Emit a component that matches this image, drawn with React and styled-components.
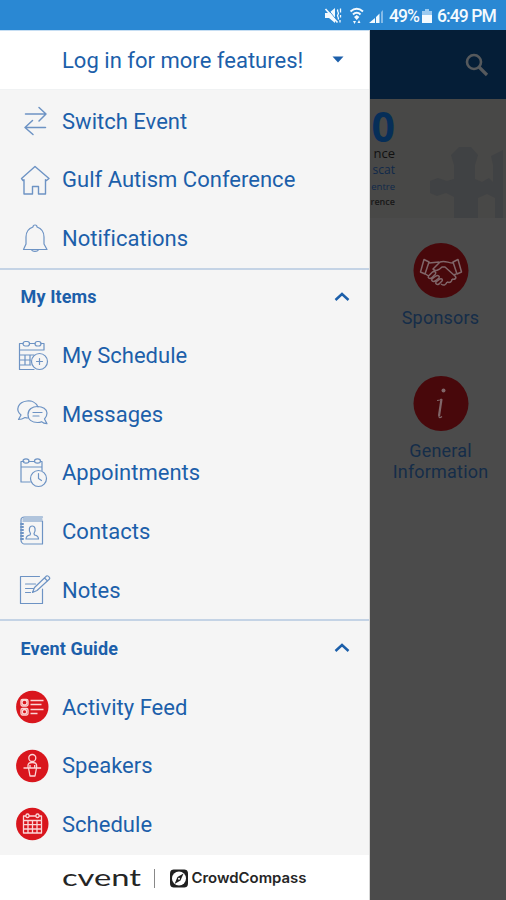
import React from "react";
import styled, { createGlobalStyle } from "styled-components";

const Global = createGlobalStyle`
  * { box-sizing: border-box; }
  html, body, #root { margin: 0; height: 100%; }
  body { font-family: Roboto, "Liberation Sans", sans-serif; overflow: hidden; background: #4b4b4b; }
`;
const Screen = styled.div`
  width: 506px; height: 900px; display: flex; flex-direction: column; overflow: hidden; background: #4b4b4b;
`;
const StatusBar = styled.header`
  height: 30px; flex: none; display: flex; align-items: center; justify-content: flex-end;
  padding: 1px 9px 0 0; background: #2a88d3; color: #f4fafe;
  svg { display: block; flex: none; }
`;
const StatusText = styled.span`
  font-size: 17.5px; font-weight: 500; line-height: 30px; white-space: nowrap; width: ${p => p.$w}px;
  letter-spacing: ${p => p.$ls || 0}px;
`;
const Gap = styled.i`width: ${p => p.$w}px; flex: none;`;
const Body = styled.div`flex: 1; min-height: 0; display: flex;`;
const Drawer = styled.nav`
  width: 370px; flex: none; display: flex; flex-direction: column; background: #f5f5f5; color: #1c5faa;
  border-right: 1px solid #d5d5d5;
`;
const Login = styled.button`
  height: 59px; flex: none; border: 0; margin: 0; padding: 0 25px 0 62px; background: #fff; color: inherit;
  font: 400 22px/59px Roboto, sans-serif; letter-spacing: 0.02px; white-space: nowrap;
  display: flex; justify-content: space-between; align-items: center; border-top: 1px solid #c6def3;
  svg { margin-bottom: 2px; }
`;
const Menu = styled.div`flex: 1; min-height: 0; padding-top: 2px; border-top: 1px solid #f0f2f3; overflow: hidden;`;
const Row = styled.a`
  height: 58.6px; display: flex; align-items: center; font-size: 22px; white-space: nowrap; letter-spacing: 0.02px;
`;
const IconBox = styled.span`
  width: 62px; height: 100%; flex: none; display: flex; align-items: center; padding-left: 15px;
  svg { display: block; }
`;
const Section = styled.h2`
  height: 58.6px; margin: 0; padding: 0 19px 3px 20.5px; border-top: 2px solid #c4d3e5; display: flex;
  align-items: center; justify-content: space-between; font-size: 18px; font-weight: 700; letter-spacing: 0.12px;
`;
const Footer = styled.footer`
  height: 45px; flex: none; background: #fff; display: flex; align-items: center; padding: 2px 0 0 61px; color: #252525;
  svg { display: block; }
`;
const Rule = styled.i`width: 1px; height: 19px; background: #888; margin: 0 14px 0 11px;`;

const Page = styled.main`flex: 1; min-width: 0; display: flex; flex-direction: column;`;
const AppBar = styled.div`
  height: 69px; flex: none; background: #051e37; display: flex; align-items: center; justify-content: flex-end; padding-right: 17px;
`;
const Banner = styled.div`
  height: 119px; flex: none; overflow: hidden; display: flex; justify-content: space-between; background: #484847;
`;
const BannerText = styled.div`width: 25px; display: flex; flex-direction: column; align-items: flex-end; padding-top: 8px;`;
const BannerLine = styled.span`
  font: ${p => p.$b || 400} ${p => p.$s}px/${p => p.$h}px "Open Sans", sans-serif; color: ${p => p.$c}; white-space: nowrap;
`;
const Tile = styled.a`
  display: flex; flex-direction: column; align-items: center; margin: ${p => p.$top}px 0 0 5px;
  color: #152d49; font-size: 18px; line-height: 21.5px; letter-spacing: 0.2px; text-align: center;
  svg { display: block; margin-bottom: 8px; }
`;

const Icon = ({ children, w = 36, h = 36, sw = 1.2 }) => (
  <svg width={w} height={h} viewBox={`0 0 ${w} ${h}`} fill="none" stroke="#6d93c4" strokeWidth={sw} strokeLinecap="round" strokeLinejoin="round">{children}</svg>
);
const Chevron = () => (
  <svg width="16" height="10" viewBox="0 0 16 10" fill="none" stroke="#1c5faa" strokeWidth="2.4"><path d="M1.500 8 8 2l6.500 6" /></svg>
);
const icons = {
  swap: <Icon sw={1.5}><path d="M10.500 11h20M24 4.500l7 6.500-7 7M30.500 24.500h-20M17.500 17.500l-7.500 7 8 7" /></Icon>,
  home: <Icon sw={1.4}><path d="M6.500 16.500 20 4.500 34 16.500l-2.500 2-1-.8V32h-7v-7.500h-6V32H9V17.700l-1 .8z" /></Icon>,
  bell: <Icon><path d="M20 5c-1.500 0-2 1-2 2-4.500 1.500-7 4.500-7 10v7l-2.500 5.500h23.500L29 24v-7c0-5.500-2.500-8.500-7-10 0-1-.5-2-2-2zM16.500 29.500c.5 2.500 6.500 2.500 7 0" /></Icon>,
  schedule: <Icon><path d="M4.500 12h24.500V5.500H26M15 5.500h5M8 5.500H4.500v26H19M4.500 17H19M4.500 22h11M4.500 27h11M10 17v10M15 17v10" /><rect x="8" y="3.500" width="6.500" height="4.500" rx="2.200" /><rect x="20" y="3.500" width="6" height="4.500" rx="2.200" /><circle cx="24.500" cy="23.500" r="8" /><path d="M21.500 23.500h6M24.500 20.500v6" /></Icon>,
  messages: <Icon><path d="M23 11C21 6 16 4.500 12 5 3 6 0 14 6 19l-2.500 4.500c3 0 5-1 6.500-2 1 .4 2 .5 3 .5" /><path d="M32 17c0-4-4.500-6.500-9.500-6.500S13 13 13 18.500s4.500 8 9.500 8c1.500 0 3-.2 4-.8 1.500 1.500 3.500 2 5.500 2L29.500 23c1.500-1.500 2.500-3.500 2.500-6zM18 16.500h9M18 20h6" /></Icon>,
  appointments: <Icon><path d="M15 27H6V6.500h3M14 6.500h5.500M25.500 6.500h1.500v9M6 12h21" /><ellipse cx="11" cy="6" rx="3" ry="2.200" /><ellipse cx="22.500" cy="6" rx="3" ry="2.200" /><circle cx="23.500" cy="23.500" r="8" /><path d="M23.500 18.500v5l3 2" /></Icon>,
  contacts: <Icon><path d="M27.500 4h-18c-2 0-3.500 1-3.500 3v20c0 2 1.500 4 3 4h18.500V8H8M8 6h19" /><path d="M6 11h2M6 14h2M6 17h2M6 20h2M6 23h2M6 26h2" strokeWidth="2" /><path d="M15.500 20.500c-2-3-1.500-7.500 1.700-7.500s3.800 4.500 1.800 7.500l.5 1.500c2 .4 4 1.500 4 4H11c0-2.500 2-3.600 4-4z" /></Icon>,
  notes: <Icon><path d="M24.500 4.500h-19v27h22V17M10.500 12h10M10.500 16.500h8M10.500 20.500h5M17.500 20.500l2-5L31.500 4c1-.9 4 1.600 3 3L22 18.500zM29.500 6l3 3" /></Icon>,
};
const Disc = ({ children }) => (
  <svg width="34" height="34" viewBox="0 0 34 34" fill="none" stroke="#fbd6d6" strokeWidth="1.300" strokeLinejoin="round"><circle cx="17.300" cy="17" r="16.200" fill="#d9161d" stroke="none" />{children}</svg>
);
icons.feed = <Disc><circle cx="9.500" cy="12.500" r="2.500" /><rect x="6" y="9.500" width="7" height="6.500" rx="1.500" /><rect x="6" y="18.500" width="7" height="6.500" rx="1.500" /><circle cx="9.500" cy="21.700" r="2.200" /><path d="M15.500 10.500h13M15.500 14.500h11M15.500 19.500h13M15.500 23.500h7" /></Disc>;
icons.speaker = <Disc><circle cx="17.300" cy="9" r="3.500" /><path d="M13 18.500v-2c0-2 1.800-3 4.300-3s4.300 1 4.300 3v2M8.500 19h17.600M13.500 19l1.500 8h5l1.500-8M15 19v-3M19.700 19v-3" /></Disc>;
icons.calendar = <Disc><rect x="8.500" y="9" width="18" height="17" /><path d="M8.500 13.500h18M8.500 17.700h18M8.500 22h18M13 13.500V26M17.500 13.500V26M22 13.500V26" /><rect x="11" y="7" width="3" height="3.500" rx="1.300" fill="#d9161d" /><rect x="21" y="7" width="3" height="3.500" rx="1.300" fill="#d9161d" /></Disc>;

const groups = [
  { items: [["swap", "Switch Event"], ["home", "Gulf Autism Conference"], ["bell", "Notifications"]] },
  { title: "My Items", items: [["schedule", "My Schedule"], ["messages", "Messages"], ["appointments", "Appointments"], ["contacts", "Contacts"], ["notes", "Notes"]] },
  { title: "Event Guide", items: [["feed", "Activity Feed"], ["speaker", "Speakers"], ["calendar", "Schedule"]] },
];

function StatusIcons() {
  return (
    <svg width="62" height="20" viewBox="0 0 62 20" fill="#f4fafe">
      <path d="M1 7h4l6-5v15l-6-5H1z" />
      <path d="m3 2 11 14" stroke="#2a88d3" strokeWidth="1" />
      <path d="m1.500 3 12 13.500" stroke="#f4fafe" strokeWidth="1.700" />
      <path d="M14 3.500c-2 2 2 3 0 5s2 3 0 5M16.500 2.500v4M16.500 9v2.500M16 14v2.500" stroke="#f4fafe" strokeWidth="1.300" fill="none" />
      <path d="M26.500 5.500c4-3.500 8.500-3.500 12.500 0M29 8.500c2.300-2.300 5.200-2.300 7.500 0" stroke="#f4fafe" strokeWidth="2" fill="none" />
      <path d="m30 11 2.700-2 2.700 2-2.700 3zM29 15h3l-1.500 3zM33.500 17h3L35 14z" />
      <path d="M45 17 51 12v5zM52 11l3.500-3.500V17H52z" />
      <path d="M57 6l2-2v13h-2z" opacity=".45" />
    </svg>
  );
}

export default function App() {
  return (
    <>
      <Global />
      <Screen>
        <StatusBar>
          <StatusIcons />
          <Gap $w={3} />
          <StatusText $w={29} $ls={-0.9}>49%</StatusText>
          <Gap $w={4} />
          <svg width="10" height="14" viewBox="0 0 10 14"><path d="M3 0h4v2h3v4H0V2h3z" fill="#9bcaf0" /><path d="M0 6h10v8H0z" fill="#f4fafe" /></svg>
          <Gap $w={5} />
          <StatusText $w={60} $ls={-0.9}>6:49 PM</StatusText>
        </StatusBar>
        <Body>
          <Drawer>
            <Login>
              Log in for more features!
              <svg width="12" height="7" viewBox="0 0 12 7"><path d="M.5.500h11L6 6.500z" fill="#1c5faa" /></svg>
            </Login>
            <Menu>
              {groups.map((g, i) => (
                <React.Fragment key={i}>
                  {g.title && <Section>{g.title}<Chevron /></Section>}
                  {g.items.map(([icon, label]) => (
                    <Row key={label}><IconBox>{icons[icon]}</IconBox>{label}</Row>
                  ))}
                </React.Fragment>
              ))}
            </Menu>
            <Footer>
              <svg width="82" height="36" viewBox="0 0 82 36" fill="#252525"><text x="1" y="24.500" fontFamily="Lato" fontSize="23.500" textLength="79" lengthAdjust="spacingAndGlyphs">cvent</text></svg>
              <Rule />
              <svg width="140" height="24" viewBox="0 0 140 24">
                <path d="M6 2.500h8c4 0 5 1 5 5v8c0 4-1 5-5 5H6c-4 0-5-1-5-5v-8c0-4 1-5 5-5z" fill="#202020" />
                <circle cx="10" cy="11.500" r="7" fill="#fff" />
                <path d="m14.500 6.500-3 7-6 3.500 3-7z" fill="#202020" /><circle cx="10" cy="11.700" r="1" fill="#fff" />
                <text x="22.500" y="16" fontFamily="Inter" fontWeight="600" fontSize="14" fill="#252525" textLength="115" lengthAdjust="spacingAndGlyphs">CrowdCompass</text>
              </svg>
            </Footer>
          </Drawer>
          <Page>
            <AppBar>
              <svg width="24" height="24" viewBox="0 0 24 24" fill="none" stroke="#56595c" strokeWidth="2.600"><circle cx="9" cy="9" r="7" /><path d="m14 14 8 8" strokeWidth="3.200" /></svg>
            </AppBar>
            <Banner>
              <BannerText>
                <BannerLine $s={41} $h={38} $b={700} $c="#062e58">.0</BannerLine>
                <BannerLine $s={13} $h={17} $c="#111">nce</BannerLine>
                <BannerLine $s={12} $h={16} $c="#10294a">scat</BannerLine>
                <BannerLine $s={9.5} $h={17} $c="#10294a">entre</BannerLine>
                <BannerLine $s={9} $h={13} $b={600} $c="#171717">rence</BannerLine>
              </BannerText>
              <svg width="80" height="119" viewBox="0 0 80 119" fill="#404244"><path d="M28 119V98l-8-4-9 3-7-3V82l8-3 9 3 7-2V66l-3-10 8-8h12l7 8-3 10v14l7 3 7-4 4 4v-17l-2-9 12-6v70H69V99l-8-4-9 4v20z" /></svg>
            </Banner>
            <Tile $top={25}>
              <svg width="56" height="56" viewBox="0 0 56 56" fill="none" stroke="#806669" strokeWidth="1.500" strokeLinejoin="round"><circle cx="28" cy="27.500" r="27.500" fill="#48080b" stroke="none" />
                <path d="M11 16.500 16 19l-4 12-4.500-2zM45 16.500 40 19l4 12 4.500-2zM16 20l10-1M12.500 31l3 2M40 20c-5 0-8-3-13-1l-7 7c2 3 6 1 9-2h3l10 9c2 2 0 4-3 3M39 36c0 3-2 4-5 3M34 39c-1 3-3 4-6 2M43 31l-2 1M15.500 33l4-4c2-1 4 0 3 2l-4 4c-2 1-4 0-3-2zM19 36l4-3c2-1 4 0 3 2l-4 3c-2 1-4 0-3-2zM23 39l4-3c2-1 3 1 2 2l-3 3c-2 1-4 0-3-2z" /></svg>
              Sponsors
            </Tile>
            <Tile $top={47}>
              <svg width="56" height="56" viewBox="0 0 56 56"><circle cx="28" cy="27.500" r="27.500" fill="#48080b" /><g fill="none" stroke="#806669"><path d="M24 24.500q3 0 4.500-1.500" strokeWidth="1" /><path d="M28.500 23 26 40" strokeWidth="2.200" /><path d="M26 40c-.3 2 1 2 3 .5" strokeWidth="1.200" /></g><circle cx="30.500" cy="14.500" r="2" fill="#806669" /></svg>
              General<br />Information
            </Tile>
          </Page>
        </Body>
      </Screen>
    </>
  );
}
